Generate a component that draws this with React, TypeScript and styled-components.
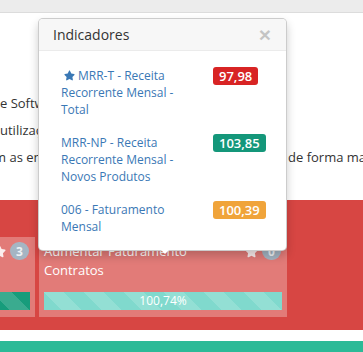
import React from "react";
import styled, { createGlobalStyle } from "styled-components";
import { FaStar } from "react-icons/fa";

const GlobalStyle = createGlobalStyle`
  html, body {
    margin: 0;
    padding: 0;
  }
  body {
    width: 363px;
    height: 352px;
    overflow: hidden;
    background: #fff;
    font-family: "Open Sans", "Liberation Sans", sans-serif;
    color: #333;
  }
`;

const Page = styled.div`
  position: relative;
  width: 363px;
  height: 352px;
  overflow: hidden;
`;

const TopBar = styled.div`
  height: 12px;
  background: #ececec;
  border-bottom: 1px solid #dcdcdc;
`;

const Intro = styled.div`
  display: flex;
  flex-direction: column;
  padding-top: 81px;
  font-size: 13px;
  line-height: 18px;
`;

const Line = styled.div<{ $shift?: number }>`
  display: flex;
  white-space: nowrap;
  margin: 0 0 9px ${(p) => p.$shift ?? 0}px;
`;

const Clip = styled.span<{ $w: number }>`
  flex: 0 0 ${(p) => p.$w}px;
  overflow: hidden;
`;

const Board = styled.section`
  margin-top: 25px;
  height: 130px;
  box-sizing: border-box;
  padding: 37px 0 13px;
  background: #d74643;
  overflow: hidden;
`;

const CardRow = styled.div`
  display: flex;
  gap: 4px;
  margin-left: -213px;
`;

const Card = styled.div`
  flex: 0 0 248px;
  box-sizing: border-box;
  padding: 5px 5px 7px;
  background: #e27b78;
  color: #fff;
`;

const CardHead = styled.div`
  display: flex;
  justify-content: space-between;
  align-items: flex-start;
  gap: 8px;
`;

const CardTitle = styled.div`
  font-size: 13px;
  line-height: 19px;
  height: 38px;
`;

const CardMeta = styled.div`
  display: flex;
  align-items: center;
  gap: 4px;
  height: 18px;
  margin-right: 1px;
  color: #fbeeee;
`;

const Count = styled.span`
  min-width: 19px;
  height: 18px;
  border-radius: 9px;
  background: #a5b5c3;
  color: #eef2f5;
  font-size: 12px;
  font-weight: 700;
  display: flex;
  align-items: center;
  justify-content: center;
`;

const Bar = styled.div<{ $tone: string }>`
  margin-top: 12px;
  height: 18px;
  background-color: ${(p) => p.$tone};
  background-image: linear-gradient(
    45deg,
    rgba(255, 255, 255, 0.15) 25%,
    transparent 25%,
    transparent 50%,
    rgba(255, 255, 255, 0.15) 50%,
    rgba(255, 255, 255, 0.15) 75%,
    transparent 75%,
    transparent
  );
  background-size: 40px 40px;
  color: #fff;
  font-size: 12px;
  line-height: 18px;
  text-align: center;
`;

const Footer = styled.div`
  margin-top: 11px;
  height: 11px;
  background: #2cba97;
`;

const Popover = styled.div`
  position: absolute;
  top: 18px;
  left: 38px;
  width: 249px;
  box-sizing: border-box;
  background: #fff;
  border: 1px solid rgba(0, 0, 0, 0.2);
  border-radius: 5px;
  box-shadow: 0 5px 10px rgba(0, 0, 0, 0.2);

  &::after {
    content: "";
    position: absolute;
    left: 122px;
    bottom: -4px;
    border-left: 4px solid transparent;
    border-right: 4px solid transparent;
    border-top: 4px solid #fff;
  }
`;

const PopHeader = styled.div`
  display: flex;
  justify-content: space-between;
  align-items: center;
  padding: 8px 14px;
  background: #f7f7f7;
  border-bottom: 1px solid #ebebeb;
  border-radius: 4px 4px 0 0;
  font-size: 14px;
  line-height: 15px;
`;

const Close = styled.button`
  border: 0;
  padding: 0;
  margin-right: 1px;
  background: transparent;
  font-family: "Liberation Sans", sans-serif;
  font-size: 21px;
  font-weight: 700;
  line-height: 15px;
  color: #000;
  opacity: 0.2;
`;

const PopBody = styled.div`
  padding: 8px 14px 7px;
`;

const Item = styled.div`
  display: grid;
  grid-template-columns: 136px auto;
  column-gap: 16px;
  padding: 8px;
  font-size: 12px;
  line-height: 17px;
`;

const Name = styled.a`
  color: #3a78b5;
  text-decoration: none;
`;

const Pin = styled(FaStar)`
  margin: 0 3px 0 3px;
  width: 11px;
  height: 11px;
  vertical-align: -1px;
`;

const Score = styled.span<{ $tone: string }>`
  justify-self: start;
  align-self: start;
  padding: 2px 6px;
  border-radius: 3px;
  background: ${(p) => p.$tone};
  color: #fff;
  font-size: 13px;
  line-height: 14px;
  font-weight: 600;
`;

const indicators = [
  { name: "MRR-T - Receita Recorrente Mensal - Total", value: "97,98", tone: "#d82424", starred: true },
  { name: "MRR-NP - Receita Recorrente Mensal - Novos Produtos", value: "103,85", tone: "#14977a", starred: false },
  { name: "006 - Faturamento Mensal", value: "100,39", tone: "#f0a43a", starred: false },
];

const cards = [
  { title: "Aumentar Faturamento Serviços", count: 3, bar: "#179c7b", pct: "" },
  { title: "Aumentar Faturamento Contratos", count: 0, bar: "#80d9cd", pct: "100,74%" },
];

export default function App() {
  return (
    <Page>
      <GlobalStyle />
      <TopBar />
      <Intro>
        <Line $shift={-8}>de Software para gestão de metas.</Line>
        <Line>utilização do painel de metas.</Line>
        <Line $shift={-20}>
          <Clip $w={308}>com as empresas parceiras e clientes,</Clip>
          de forma mais simples.
        </Line>
      </Intro>
      <Board>
        <CardRow>
          {cards.map((c) => (
            <Card key={c.title}>
              <CardHead>
                <CardTitle>{c.title}</CardTitle>
                <CardMeta>
                  <FaStar size={13} />
                  <Count>{c.count}</Count>
                </CardMeta>
              </CardHead>
              <Bar $tone={c.bar}>{c.pct}</Bar>
            </Card>
          ))}
        </CardRow>
      </Board>
      <Footer />
      <Popover>
        <PopHeader>
          Indicadores
          <Close>×</Close>
        </PopHeader>
        <PopBody>
          {indicators.map((i) => (
            <Item key={i.name}>
              <Name href="#">
                {i.starred && <Pin />}
                {i.name}
              </Name>
              <Score $tone={i.tone}>{i.value}</Score>
            </Item>
          ))}
        </PopBody>
      </Popover>
    </Page>
  );
}
